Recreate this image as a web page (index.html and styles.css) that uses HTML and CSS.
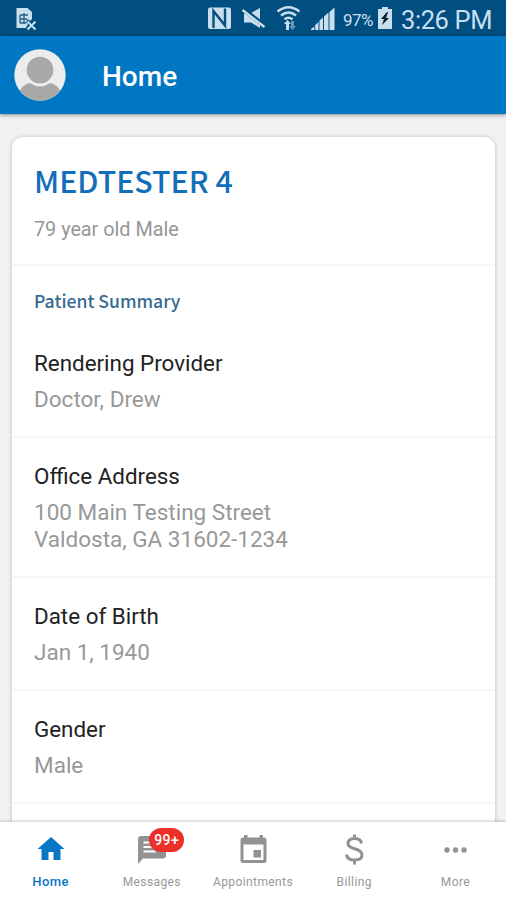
FILE: index.html
```html
<!DOCTYPE html>
<html lang="en">
<head>
<meta charset="utf-8">
<title>Home</title>
<link rel="stylesheet" href="styles.css">
</head>
<body>
<div class="app">
  <div class="status">
    <svg class="status-icons" width="506" height="36" viewBox="0 0 506 36" fill="#c9dfee">
      <path d="M16.500 8h11l4.500 4v7l-2 2-2-2-2 3 2 2-2 4h-9.500z"/>
      <path d="M20 15h8M20 19h7M20 23h6M20 15v8M24 13v11" stroke="#245f89" stroke-width="1.300" fill="none"/>
      <path d="M27.500 21.500l8 8M35.500 21.500l-8 8" stroke="#c9dfee" stroke-width="2" fill="none"/>
      <path d="M210 7.500h19q2 0 2 2V27q0 2-2 2h-19q-2 0-2-2V9.500q0-2 2-2z"/>
      <path d="M213.500 28V11l11.500 14.500V8.500" fill="none" stroke="#064f80" stroke-width="2.400"/>
      <path d="M244 13.500h6l10-5.500v20l-9-5.500h-7z"/>
      <path d="M243 9l22 17" stroke="#064f80" stroke-width="4.500"/>
      <path d="M242.500 10l22 17" stroke="#c9dfee" stroke-width="2.300"/>
      <g fill="none" stroke="#c9dfee" stroke-width="2.500"><path d="M277.500 11.500q11-8.500 22 0M281 15.500q7.500-6 15 0M284.500 19.300q4-3 8 0"/></g>
      <path d="M284 24l3.500-4 3.500 4h-2v6h-3v-6z"/>
      <path d="M291 21h3v5h2l-3.500 4-3.500-4h2z" opacity=".5"/>
      <path d="M311 30h3.300v-3.500l-3.300 2.500zM315.200 30h3.300v-8l-3.300 3zM319.500 30h3.500v-12.500l-3.500 3zM324 30h4.500V12.500l-4.500 4zM329.500 30h5V7.500l-5 4.500z"/>
      <path d="M382 7v2h-4v20h14V9h-4V7z"/>
      <path d="M387 12l-6 7h3l-2 6 7-7h-3l2-6z" fill="#071d2b"/>
    </svg>
    <span class="battery">97%</span>
    <span class="clock">3:26 PM</span>
  </div>
  <header class="header">
    <svg class="avatar" width="52" height="52" viewBox="0 0 52 52">
      <defs><clipPath id="disc"><circle cx="26" cy="26" r="25.700"/></clipPath></defs>
      <g clip-path="url(#disc)"><rect width="52" height="52" fill="#ececec"/>
      <path d="M5 43q4-8 11-9 10 7 20 0 7 1 11 9v10H5z" fill="#a8a8a8"/></g>
      <circle cx="26" cy="21" r="13.300" fill="#a8a8a8"/>
    </svg>
    <h1 class="title">Home</h1>
  </header>
  <main class="content">
    <section class="card">
      <div class="patient">
        <h2 class="name"><span>MEDTESTER 4</span></h2>
        <p class="age"><span>79 year old Male</span></p>
      </div>
      <div class="row provider">
        <h3 class="summary"><span>Patient Summary</span></h3>
        <p class="label"><span>Rendering Provider</span></p>
        <p class="value"><span>Doctor, Drew</span></p>
      </div>
      <div class="row address">
        <p class="label"><span>Office Address</span></p>
        <p class="value"><span>100 Main Testing Street</span><br><span>Valdosta, GA 31602-1234</span></p>
      </div>
      <div class="row">
        <p class="label"><span>Date of Birth</span></p>
        <p class="value"><span>Jan 1, 1940</span></p>
      </div>
      <div class="row">
        <p class="label"><span>Gender</span></p>
        <p class="value"><span>Male</span></p>
      </div>
      <div class="row"></div>
    </section>
  </main>
  <nav class="tabs">
    <a class="tab active">
      <svg width="36" height="36" viewBox="0 0 36 36"><path d="M18 6L4.500 18H8.500V29h7V21h5v8h7V18h4z" fill="#0577c5"/></svg>
      <span>Home</span>
    </a>
    <a class="tab">
      <svg width="36" height="36" viewBox="0 0 36 36"><path d="M7 5h22q3 0 3 3v16.500q0 3-3 3H9L4 33V8q0-3 3-3z" fill="#929292"/><path d="M9.500 11.500h17M9.500 16h17M9.500 20.500h12" stroke="#fff" stroke-width="2.200"/></svg>
      <span>Messages</span>
      <b class="badge">99+</b>
    </a>
    <a class="tab">
      <svg width="36" height="36" viewBox="0 0 36 36"><path fill-rule="evenodd" d="M9 4h3.500v2.500h12V4H28v2.500h1q2.500 0 2.500 2.500v20.500q0 2.500-2.500 2.500H8q-2.500 0-2.500-2.500V9Q5.500 6.500 8 6.500h1zM8.500 13.500V29h20V13.500zM18.500 19H26v7.500h-7.500z" fill="#929292"/></svg>
      <span>Appointments</span>
    </a>
    <a class="tab">
      <svg width="36" height="36" viewBox="0 0 36 36"><path d="M25.500 12.500q-.5-5-7-5-6.500 0-6.500 5 0 3.500 6.500 5.200 7.500 2 7.500 6.300 0 5-7.500 5-7.500 0-8-5.500M18.500 3.500v4M18.500 29v4.500" fill="none" stroke="#929292" stroke-width="3"/></svg>
      <span>Billing</span>
    </a>
    <a class="tab">
      <svg width="36" height="36" viewBox="0 0 36 36" fill="#929292"><circle cx="10" cy="19" r="2.700"/><circle cx="18.500" cy="19" r="2.700"/><circle cx="27" cy="19" r="2.700"/></svg>
      <span>More</span>
    </a>
  </nav>
</div>
</body>
</html>
```
FILE: styles.css
```css
* { box-sizing: border-box; }
body, h1, h2, h3, p { margin: 0; }
body { font-family: Roboto, sans-serif; background: #f2f2f2; }
.app { display: flex; flex-direction: column; width: 506px; height: 900px; overflow: hidden; }
.status { position: relative; display: flex; flex: none; justify-content: flex-end; align-items: center; height: 36px; padding: 3px 14px 0 0; background: #004f80; color: #c9dfee; }
.status-icons { position: absolute; left: 0; top: 0; }
.battery { font-size: 17px; letter-spacing: -0.5px; margin-right: 28px; }
.clock { font-size: 25.5px; line-height: 32px; letter-spacing: -0.4px; }
.header { position: relative; z-index: 1; display: flex; flex: none; align-items: center; height: 78px; padding: 0 14px 0; background: #0077c2; box-shadow: 0 1px 4px rgba(0,0,0,.45); }
.title { margin: 3px 0 0 36px; color: #fff; font-size: 28px; font-weight: 500; line-height: 36px; }
.content { flex: 1; min-height: 0; padding: 23px 11px 0 12px; overflow: hidden; }
.card { height: 780px; background: #fff; border-radius: 11px; box-shadow: 0 0 4px rgba(0,0,0,.22); }
.patient { height: 127px; padding: 22px 22px 0; }
.name { color: #126eb8; font: 500 30.3px/42px "Noto Sans CJK SC", sans-serif; }
.age { margin-top: 16px; color: #969696; font-size: 19.8px; line-height: 26px; }
.row { height: 113px; padding: 24px 22px 0; border-top: 2px solid #f6f6f6; }
.provider { height: 172px; padding-top: 23px; }
.address { height: 140px; }
.summary { height: 24px; margin-bottom: 36px; color: #386a91; font: 500 17.6px/24px "Noto Sans CJK SC", sans-serif; }
.label { color: #222; font-size: 22.4px; line-height: 28px; }
.value { margin-top: 9px; color: #989898; font-size: 22.5px; line-height: 27px; }
.tabs { position: relative; z-index: 1; display: flex; flex: none; height: 78px; background: #fff; box-shadow: 0 -1px 3px rgba(0,0,0,.2); }
.tab { position: relative; display: flex; flex: 1; flex-direction: column; align-items: center; padding-top: 9px; color: #989898; font-size: 12px; line-height: 16px; letter-spacing: .4px; }
.tab svg { margin-bottom: 7px; }
.active { color: #0577c5; font-size: 13px; font-weight: 500; }
.badge { position: absolute; left: 48px; top: 6px; width: 35px; height: 24px; border-radius: 12px; background: #ed3027; color: #fff; font-size: 14px; font-weight: 500; line-height: 24px; text-align: center; }
```
